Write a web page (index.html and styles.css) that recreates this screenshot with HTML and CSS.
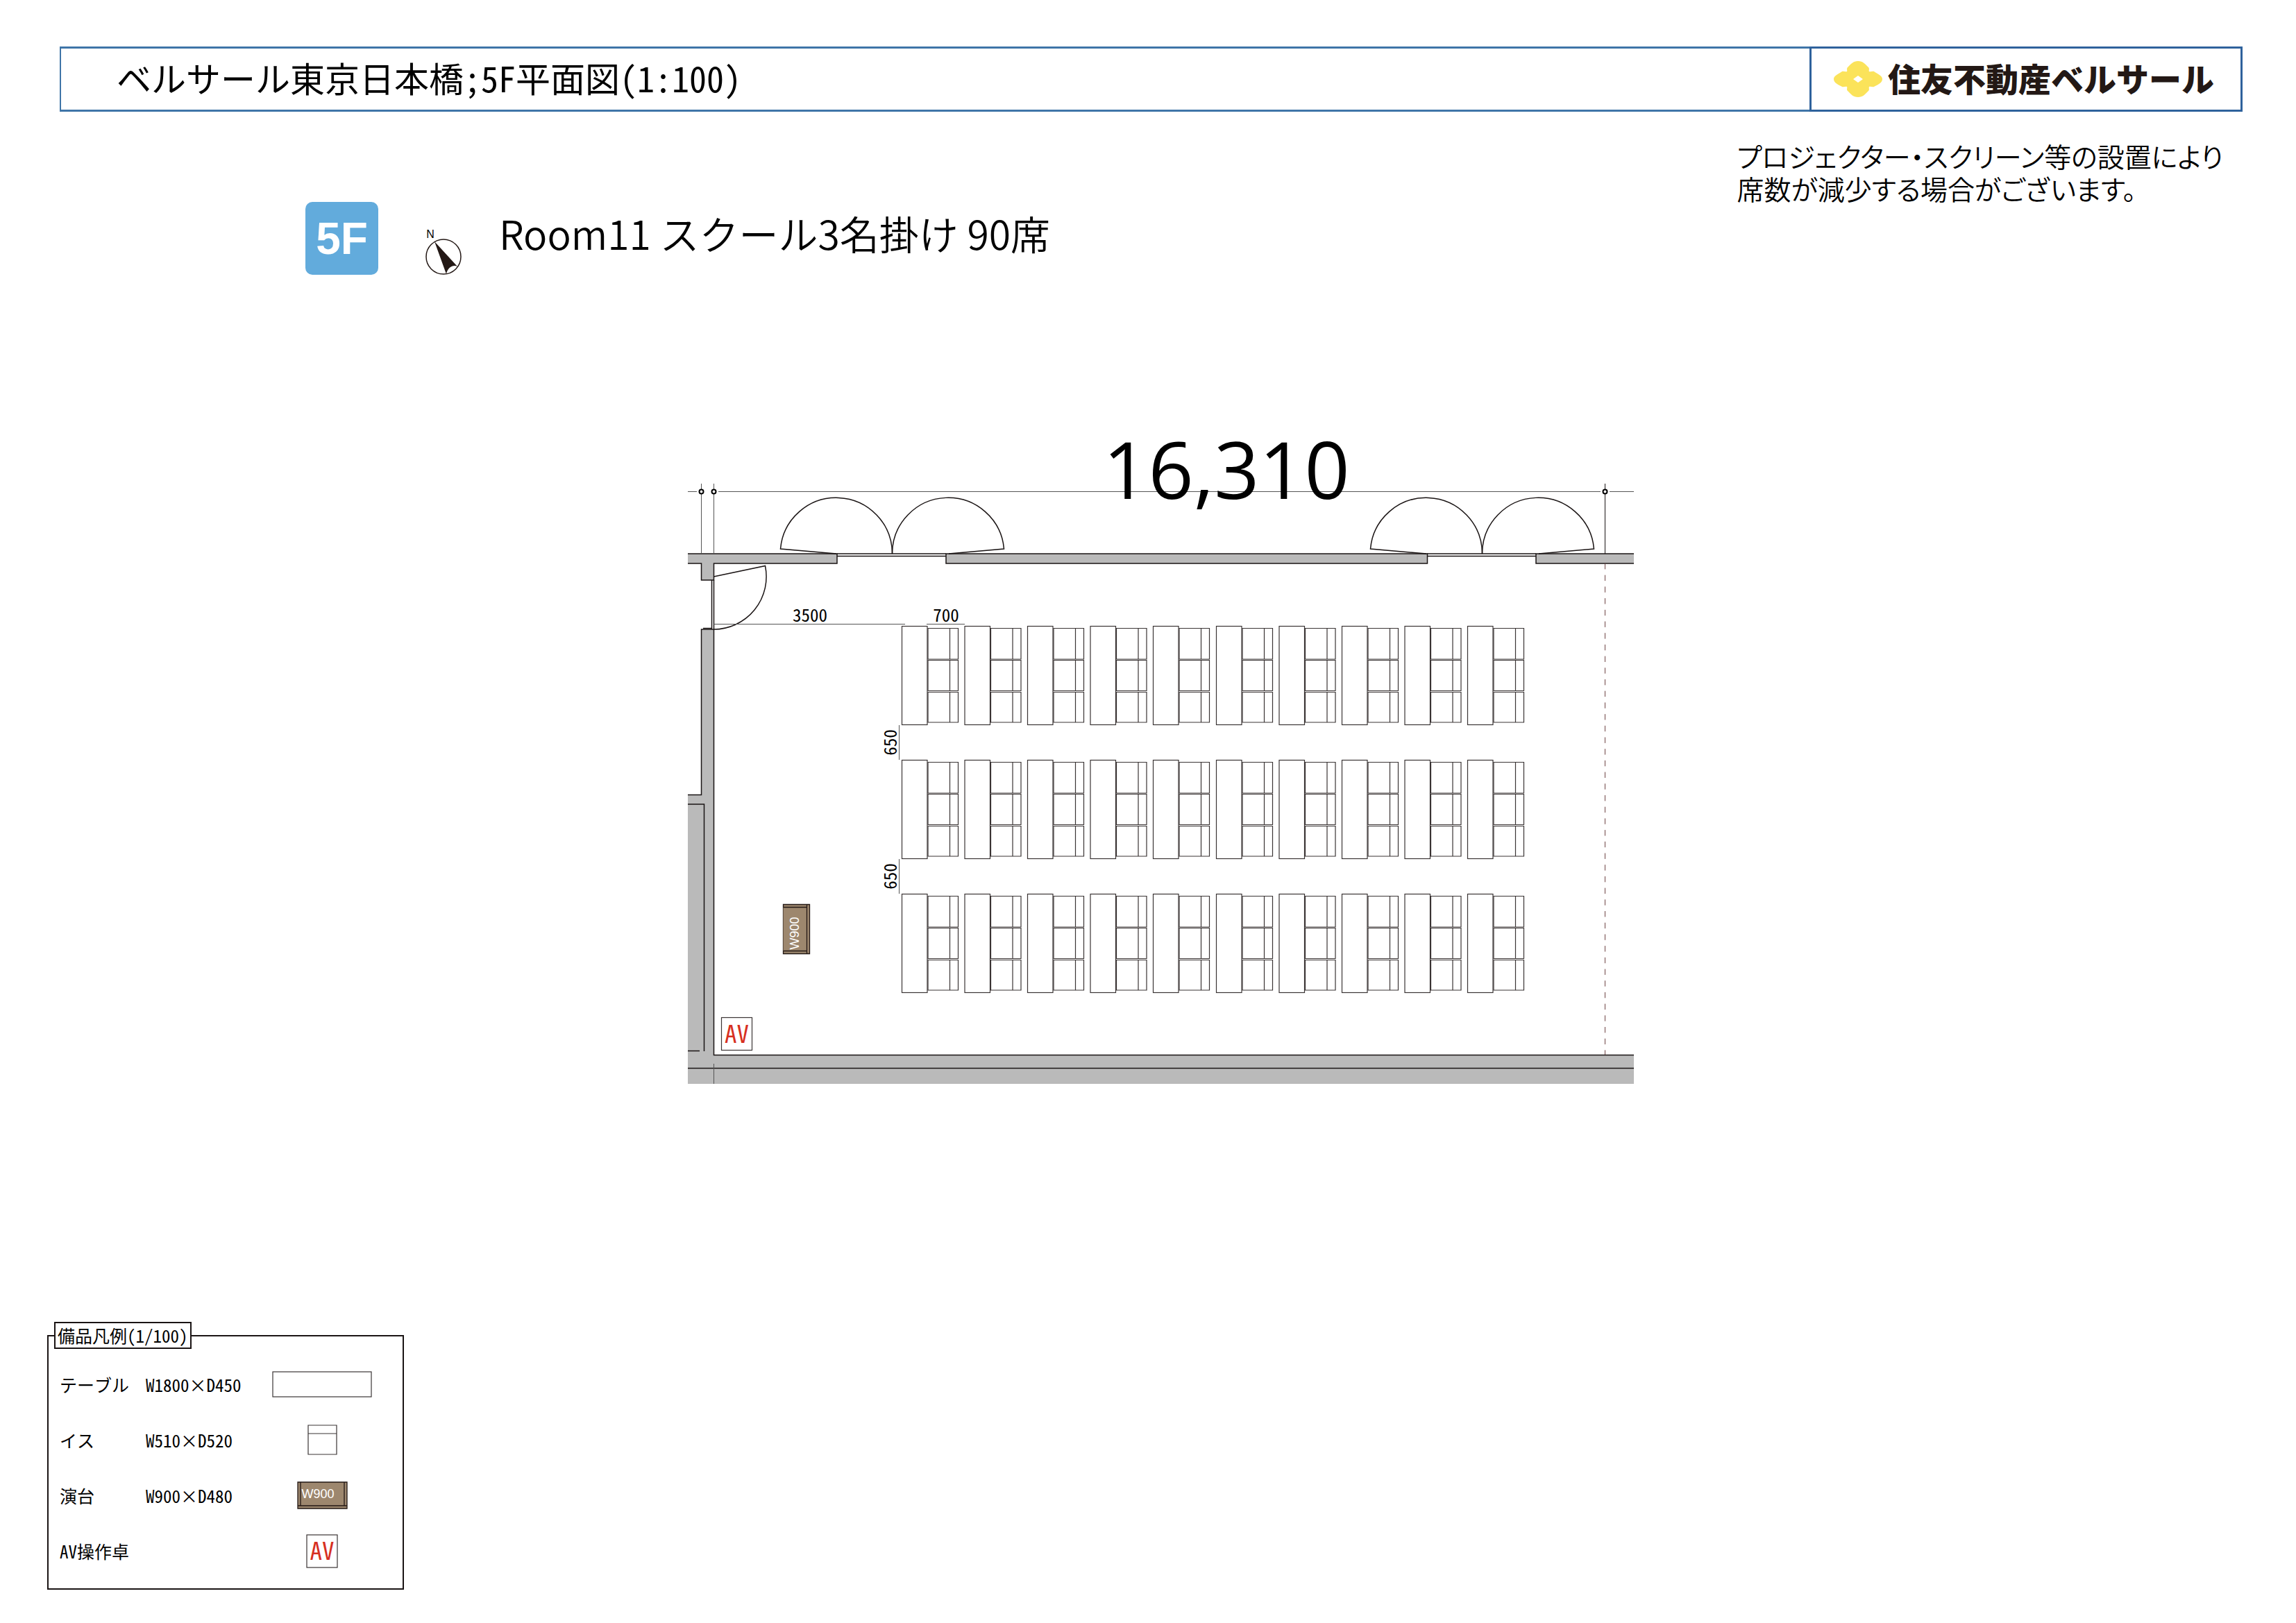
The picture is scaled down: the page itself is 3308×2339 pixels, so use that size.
FILE: index.html
```html
<!DOCTYPE html>
<html lang="ja">
<head>
    <meta charset="UTF-8">
    <meta name="viewport" content="width=device-width, initial-scale=1.0">
    <title>ベルサール東京日本橋 5F平面図</title>
    <link rel="stylesheet" href="styles.css">
</head>
<body>

    <header class="header">
        <h1 class="header-title">ベルサール東京日本橋;5F平面図(1:100)</h1>
        <div class="brand">
            <svg class="brand-mark" viewBox="0 0 70 52" aria-hidden="true">
                <path fill="#fbe35a" fill-rule="evenodd" d="M35 0C42 0 45 4 50 9C52 11 50 14 51 15C53 16 56 14 58 15C64 19 70 21 70 26C70 31 64 34 58 37C56 38 53 36 51 37C50 39 52 41 50 43C45 48 42 52 35 52C28 52 25 48 20 43C18 41 20 39 19 37C17 36 14 38 12 37C6 34 0 31 0 26C0 21 6 19 12 15C14 14 17 16 19 15C20 14 18 11 20 9C25 4 28 0 35 0ZM35 21L28 26L35 31L42 26Z"/>
            </svg>
            <span class="brand-name">住友不動産ベルサール</span>
        </div>
    </header>

    <div class="intro">
        <div class="room">
            <span class="floor-badge">5F</span>
            <svg class="compass" viewBox="0 0 54 68" aria-hidden="true">
                <text class="compass-n" x="8" y="14">N</text>
                <circle cx="27" cy="41" r="25" fill="none" stroke="#231815" stroke-width="1.5"/>
                <path d="M14 19L47 55C41 52 33 56 31 66Z" fill="#231815"/>
            </svg>
            <h2 class="room-title">Room11 スクール3名掛け 90席</h2>
        </div>
        <p class="note">プロジェクター・スクリーン等の設置により<br>席数が減少する場合がございます。</p>
    </div>

    <main class="plan">
        <svg class="plan-drawing" viewBox="0 0 1366 944" role="img" aria-label="Room11 平面図">
            <defs>
                <!-- テーブル1台とイス3脚 -->
                <g id="seat">
                    <rect x="0" y="0" width="36.5" height="142"/>
                    <path d="M37.5 3H81V47.5H37.5ZM69 3V47.5"/>
                    <path d="M37.5 49H81V93H37.5ZM69 49V93"/>
                    <path d="M37.5 95H81V138.5H37.5ZM69 95V138.5"/>
                </g>
                <g id="seatRow">
                    <use href="#seat"/>
                    <use href="#seat" x="90.5"/>
                    <use href="#seat" x="181"/>
                    <use href="#seat" x="271.5"/>
                    <use href="#seat" x="362"/>
                    <use href="#seat" x="453"/>
                    <use href="#seat" x="543.5"/>
                    <use href="#seat" x="634"/>
                    <use href="#seat" x="724.5"/>
                    <use href="#seat" x="815"/>
                </g>
                <g id="doors">
                    <path d="M295.5 177A80.65 80.65 0 0 0 134.5 170L215 177"/>
                    <path d="M295.5 177A80.65 80.65 0 0 1 456.5 170L377 177"/>
                    <path d="M216 177H373M216 180.5H373"/>
                </g>
            </defs>

            <!-- 壁 -->
            <g class="wall">
                <path d="M1 177H216V191H38.5V215H20.5V191H1Z"/>
                <path d="M373 177H1066.5V191H373Z"/>
                <path d="M1223 177H1364V191H1223Z"/>
                <path d="M20.5 286H38.5V899.5H1364V941H1V524.5H20.5Z"/>
            </g>
            <g class="outline">
                <path d="M1 177H216V191H38.5V215H20.5V191H1"/>
                <path d="M373 177H1066.5V191H373Z"/>
                <path d="M1364 177H1223V191H1364"/>
                <path d="M1 524.5H20.5V286H38.5V899.5H1364"/>
                <path d="M1 538H24.5V894M1 893.5H18M1 918.5H1364"/>
                <path d="M35.5 215V286M38.5 215V286M23 284.5H35"/>
            </g>
            <path class="thin" d="M38.5 912V941"/>

            <!-- ドア -->
            <g class="door">
                <use href="#doors"/>
                <use href="#doors" x="850"/>
                <path d="M38.5 210L112.5 194.5A76 76 0 0 1 38.5 286"/>
            </g>

            <!-- 寸法線 -->
            <path class="thin" d="M1 87.5H14M45 87.5H1316M1329 87.5H1364M20.5 76V177M38.5 76V177"/>
            <path class="dark" d="M1322.5 76V177"/>
            <path class="thin" d="M38.5 278.5H314M345 278.5H400M305.5 424V474M305.5 617V667"/>
            <g class="node">
                <circle cx="20.5" cy="87.5" r="3"/>
                <circle cx="38.5" cy="87.5" r="3"/>
                <circle cx="1322.5" cy="87.5" r="3"/>
            </g>
            <path class="partition" d="M1322.5 191V899"/>
            <text class="span-size" x="777" y="98">16,310</text>
            <text class="size" x="177" y="275">3500</text>
            <text class="size" x="373" y="275">700</text>
            <text class="size" transform="translate(302 449) rotate(-90)">650</text>
            <text class="size" transform="translate(302 642) rotate(-90)">650</text>

            <!-- 座席 -->
            <g class="seats">
                <use href="#seatRow" x="309.5" y="281.5"/>
                <use href="#seatRow" x="309.5" y="474.5"/>
                <use href="#seatRow" x="309.5" y="667.5"/>
            </g>

            <!-- 演台 -->
            <g class="podium">
                <path d="M138.5 682.5H176.5V753.5H138.5Z"/>
                <path d="M138.5 686.5H172.5V749.5H138.5M172.5 682.5V753.5"/>
            </g>
            <text class="podium-text" transform="translate(161 724) rotate(-90)">W900</text>

            <!-- AV操作卓 -->
            <rect class="av" x="49.5" y="845.5" width="44" height="47"/>
            <text class="av-text" x="71.5" y="882">AV</text>
        </svg>
    </main>

    <fieldset class="legend">
        <legend>備品凡例(1/100)</legend>
        <table>
            <tbody>
                <tr>
                    <th scope="row">テーブル</th>
                    <td>W1800×D450</td>
                    <td class="symbol">
                        <svg width="144" height="38" aria-hidden="true">
                            <rect class="av" x="1" y="1" width="142" height="36"/>
                        </svg>
                    </td>
                </tr>
                <tr>
                    <th scope="row">イス</th>
                    <td>W510×D520</td>
                    <td class="symbol">
                        <svg width="43" height="44" aria-hidden="true">
                            <path class="chair" d="M1 1H42V43H1ZM1 13H42"/>
                        </svg>
                    </td>
                </tr>
                <tr>
                    <th scope="row">演台</th>
                    <td>W900×D480</td>
                    <td class="symbol">
                        <svg width="73" height="40" aria-hidden="true">
                            <g class="podium">
                                <path d="M1 1H72V39H1Z"/>
                                <path d="M5 1V35M68 1V35M1 35H72"/>
                            </g>
                            <text class="podium-text" x="30" y="24">W900</text>
                        </svg>
                    </td>
                </tr>
                <tr>
                    <th scope="row">AV操作卓</th>
                    <td></td>
                    <td class="symbol">
                        <svg width="46" height="49" aria-hidden="true">
                            <rect class="av" x="1" y="1" width="44" height="47"/>
                            <text class="av-text" x="23" y="37">AV</text>
                        </svg>
                    </td>
                </tr>
            </tbody>
        </table>
    </fieldset>

</body>
</html>
```

FILE: styles.css
```css
* {
    box-sizing: border-box;
}

body {
    margin: 0;
    padding: 67px 77px 50px 68px;
    background-color: #fff;
    color: #000;
    font-family: "Noto Sans Mono CJK JP", "Noto Sans CJK JP", sans-serif;
}

h1, h2, p {
    margin: 0;
    font-weight: normal;
}

svg {
    display: block;
    overflow: visible;
}

.header {
    display: flex;
    margin-left: 18px;
    height: 94px;
}

.header-title {
    flex: 1;
    padding-left: 80px;
    border: 3px solid #3f75a8;
    border-left-width: 2px;
    border-right: none;
    font-size: 50px;
    line-height: 82px;
}

.brand {
    display: flex;
    align-items: center;
    gap: 8px;
    padding: 0 38px 0 32px;
    border: 3px solid #2f629c;
}

.brand-mark {
    width: 70px;
    height: 52px;
}

.brand-name {
    color: #231815;
    font-family: "Noto Sans CJK JP", sans-serif;
    font-size: 47px;
    font-weight: 900;
    line-height: 84px;
    margin-bottom: 4px;
}

.intro {
    display: flex;
    justify-content: space-between;
    align-items: flex-start;
    margin-top: 40px;
}

.room {
    display: flex;
    gap: 67px;
    padding: 90px 0 0 372px;
}

.floor-badge {
    width: 105px;
    height: 105px;
    border-radius: 10px;
    background-color: #62abdc;
    color: #fff;
    font-family: "Liberation Sans", sans-serif;
    font-size: 64px;
    font-weight: bold;
    line-height: 107px;
    text-align: center;
}

.compass {
    width: 54px;
    height: 68px;
    margin-top: 38px;
}

.compass-n {
    font-family: "Liberation Sans", sans-serif;
    font-size: 16px;
    text-anchor: middle;
}

.room-title {
    margin-left: -14px;
    font-family: "Noto Sans CJK JP", sans-serif;
    font-size: 57px;
    font-weight: 350;
    line-height: 88px;
}

.note {
    padding-right: 28px;
    font-family: "Noto Sans CJK JP", sans-serif;
    font-size: 39px;
    font-weight: 350;
    font-feature-settings: "palt";
    line-height: 47px;
}

.plan {
    padding-left: 922px;
    margin-top: 224px;
}

.plan-drawing {
    width: 100%;
    max-width: 1366px;
}

.wall {
    fill: #bababa;
}

.outline, .door, .seats, .chair, .thin, .dark, .node, .partition {
    fill: none;
    stroke: #1a1414;
}

.outline {
    stroke-width: 1.5;
}

.door {
    stroke-width: 1.5;
}

.seats, .chair, .av {
    stroke: #3a3434;
    stroke-width: 1.2;
}

.thin {
    stroke: #555;
}

.node {
    fill: #fff;
    stroke: #000;
    stroke-width: 2;
}

.partition {
    stroke: #6e4444;
    stroke-dasharray: 8.4 8.3;
}

.span-size {
    font-family: "Open Sans", sans-serif;
    font-size: 114px;
    text-anchor: middle;
}

.size {
    font-size: 25px;
    text-anchor: middle;
}

.podium {
    fill: #9d876e;
    stroke: #231815;
    stroke-width: 1.3;
}

.podium-text {
    fill: #fff;
    font-family: "Liberation Sans", sans-serif;
    font-size: 18px;
    text-anchor: middle;
}

.av {
    fill: #fff;
}

.av-text {
    fill: #d7301f;
    font-size: 35px;
    text-anchor: middle;
}

.legend {
    width: 514px;
    margin: 340px 0 0;
    padding: 11px 16px 14px;
    border: 2px solid #1a1414;
    font-size: 25px;
}

.legend legend {
    margin-left: -8px;
    padding: 0 3px;
    border: 2px solid #1a1414;
    line-height: 35px;
}

.legend table {
    width: 100%;
    border-collapse: collapse;
}

.legend tr {
    height: 80px;
}

.legend th, .legend td {
    padding: 0;
    font-weight: normal;
    text-align: left;
    white-space: nowrap;
}

.legend th {
    width: 124px;
}

.legend .symbol {
    width: 200px;
}

.symbol svg {
    margin: 0 auto;
}
```
